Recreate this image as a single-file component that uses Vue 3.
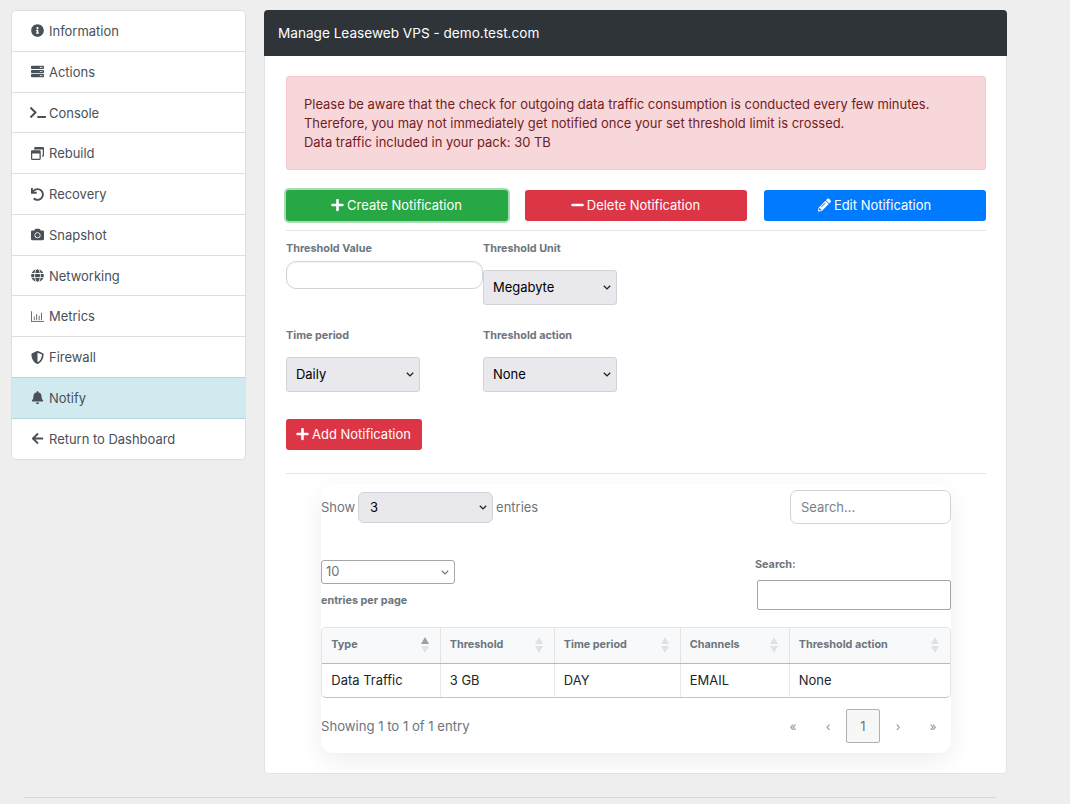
<script setup>
const iconPaths = {
  info: ['0 0 512 512', 'M256 8C119.043 8 8 119.083 8 256c0 136.997 111.043 248 248 248s248-111.003 248-248C504 119.083 392.957 8 256 8zm0 110c23.196 0 42 18.804 42 42s-18.804 42-42 42-42-18.804-42-42 18.804-42 42-42zm56 254c0 6.627-5.373 12-12 12h-88c-6.627 0-12-5.373-12-12v-24c0-6.627 5.373-12 12-12h12v-64h-12c-6.627 0-12-5.373-12-12v-24c0-6.627 5.373-12 12-12h64c6.627 0 12 5.373 12 12v100h12c6.627 0 12 5.373 12 12v24z'],
  server: ['0 0 512 512', 'M32 32h448c18 0 32 14 32 32v64c0 18-14 32-32 32H32c-18 0-32-14-32-32V64c0-18 14-32 32-32zm400 40a24 24 0 1 0 0 48 24 24 0 0 0 0-48zm-64 0a24 24 0 1 0 0 48 24 24 0 0 0 0-48zM32 192h448c18 0 32 14 32 32v64c0 18-14 32-32 32H32c-18 0-32-14-32-32v-64c0-18 14-32 32-32zm400 40a24 24 0 1 0 0 48 24 24 0 0 0 0-48zm-64 0a24 24 0 1 0 0 48 24 24 0 0 0 0-48zM32 352h448c18 0 32 14 32 32v64c0 18-14 32-32 32H32c-18 0-32-14-32-32v-64c0-18 14-32 32-32zm400 40a24 24 0 1 0 0 48 24 24 0 0 0 0-48zm-64 0a24 24 0 1 0 0 48 24 24 0 0 0 0-48z'],
  terminal: ['0 0 640 512', 'M257.981 272.971L63.638 467.314c-9.373 9.373-24.569 9.373-33.941 0L7.029 444.647c-9.357-9.357-9.375-24.522-.04-33.901L161.011 256 6.99 101.255c-9.335-9.379-9.317-24.544.04-33.901l22.667-22.667c9.373-9.373 24.569-9.373 33.941 0L257.981 239.03c9.373 9.372 9.373 24.568 0 33.941zM640 456v-32c0-13.255-10.745-24-24-24H312c-13.255 0-24 10.745-24 24v32c0 13.255 10.745 24 24 24h304c13.255 0 24-10.745 24-24z'],
  windows: ['0 0 512 512', 'M176 0h288c26.500 0 48 21.500 48 48v288c0 26.500-21.500 48-48 48h-32v-48h32V96H176v16h-48V48c0-26.500 21.500-48 48-48zM48 128h288c26.500 0 48 21.500 48 48v288c0 26.500-21.500 48-48 48H48c-26.500 0-48-21.500-48-48V176c0-26.500 21.500-48 48-48zm0 128v208h288V256H48z'],
  undo: ['0 0 512 512', 'M212.333 224.333H12c-6.627 0-12-5.373-12-12V12C0 5.373 5.373 0 12 0h48c6.627 0 12 5.373 12 12v78.112C117.773 39.279 184.26 7.47 258.175 8.007c136.906.994 246.448 111.623 246.157 248.532C504.041 393.258 393.12 504 256.333 504c-64.089 0-122.496-24.313-166.51-64.215-5.099-4.622-5.334-12.554-.467-17.42l33.967-33.967c4.474-4.474 11.662-4.717 16.401-.525C170.76 415.336 211.58 432 256.333 432c97.268 0 176-78.716 176-176 0-97.267-78.716-176-176-176-58.496 0-110.28 28.476-142.274 72.333h98.274c6.627 0 12 5.373 12 12v48c0 6.627-5.373 12-12 12z'],
  camera: ['0 0 512 512', 'M512 144v288c0 26.500-21.500 48-48 48H48c-26.500 0-48-21.500-48-48V144c0-26.500 21.500-48 48-48h88l12.300-32.900c7-18.700 24.900-31.100 44.900-31.100h125.500c20 0 37.900 12.400 44.900 31.100L376 96h88c26.500 0 48 21.500 48 48zM376 288c0-66.200-53.800-120-120-120s-120 53.800-120 120 53.800 120 120 120 120-53.800 120-120zm-32 0c0 48.500-39.500 88-88 88s-88-39.500-88-88 39.500-88 88-88 88 39.500 88 88z'],
  globe: ['0 0 496 512', 'M336.500 160C322 70.700 287.800 8 248 8s-74 62.700-88.500 152h177zM152 256c0 22.200 1.200 43.500 3.300 64h185.300c2.100-20.500 3.300-41.800 3.300-64s-1.200-43.500-3.300-64H155.300c-2.100 20.500-3.300 41.800-3.300 64zm324.700-96c-28.600-67.900-86.500-120.400-158-141.600 24.400 33.800 41.200 84.700 50 141.600h108zM177.200 18.400C105.800 39.600 47.800 92.100 19.300 160h108c8.700-56.900 25.500-107.800 49.900-141.600zM487.400 192H372.700c2.100 21 3.300 42.500 3.300 64s-1.200 43-3.300 64h114.600c5.500-20.500 8.600-41.800 8.600-64s-3.100-43.500-8.500-64zM120 256c0-21.500 1.200-43 3.300-64H8.600C3.200 212.500 0 233.800 0 256s3.200 43.500 8.600 64h114.600c-2-21-3.200-42.500-3.200-64zm39.500 96c14.500 89.300 48.700 152 88.500 152s74-62.700 88.500-152h-177zm159.300 141.600c71.400-21.200 129.400-73.700 158-141.600h-108c-8.800 56.900-25.600 107.800-50 141.600zM19.300 352c28.600 67.900 86.500 120.400 158 141.600-24.400-33.800-41.200-84.700-50-141.600h-108z'],
  metrics: ['0 0 512 512', 'M0 48h32v384h480v32H0V48zm112 208h32v144h-32V256zm96-96h32v240h-32V160zm96 64h32v176h-32V224zm96-112h32v288h-32V112z'],
  shield: ['0 0 512 512', 'M466.500 83.700l-192-80a48.150 48.150 0 0 0-36.900 0l-192 80C27.700 91.100 16 108.600 16 128c0 198.500 114.500 335.700 221.500 380.300 11.800 4.900 25.100 4.900 36.900 0C360.100 472.600 496 349.300 496 128c0-19.400-11.700-36.900-29.500-44.300zM256.100 446.300l-.1-381 175.900 73.300c-3.300 151.400-82.100 261.100-175.800 307.700z'],
  bell: ['0 0 448 512', 'M224 512c35.320 0 63.970-28.650 63.970-64H160.030c0 35.350 28.650 64 63.970 64zm215.390-149.710c-19.320-20.760-55.470-51.990-55.470-154.290 0-77.700-54.480-139.900-127.940-155.160V32c0-17.670-14.320-32-31.980-32s-31.980 14.330-31.980 32v20.840C118.560 68.100 64.080 130.300 64.080 208c0 102.300-36.150 133.530-55.470 154.290-6 6.450-8.660 14.160-8.610 21.710.11 16.400 12.980 32 32.100 32h383.800c19.120 0 32-15.600 32.100-32 .05-7.550-2.610-15.270-8.610-21.710z'],
  back: ['0 0 448 512', 'M257.500 445.100l-22.200 22.200c-9.400 9.400-24.600 9.400-33.900 0L7 273c-9.400-9.400-9.400-24.600 0-33.900L201.400 44.700c9.400-9.400 24.600-9.400 33.900 0l22.200 22.200c9.500 9.500 9.300 25-.4 34.300L136.600 216H424c13.300 0 24 10.700 24 24v32c0 13.300-10.700 24-24 24H136.600l120.500 114.800c9.800 9.300 10 24.800.4 34.300z'],
  plus: ['0 0 448 512', 'M416 208H272V64c0-17.670-14.330-32-32-32h-32c-17.670 0-32 14.330-32 32v144H32c-17.670 0-32 14.330-32 32v32c0 17.670 14.330 32 32 32h144v144c0 17.670 14.330 32 32 32h32c17.670 0 32-14.330 32-32V304h144c17.670 0 32-14.330 32-32v-32c0-17.670-14.330-32-32-32z'],
  minus: ['0 0 448 512', 'M416 208H32c-17.670 0-32 14.330-32 32v32c0 17.670 14.330 32 32 32h384c17.670 0 32-14.330 32-32v-32c0-17.670-14.330-32-32-32z'],
  pencil: ['0 0 512 512', 'M497.900 142.100l-46.100 46.100c-4.700 4.700-12.300 4.700-17 0l-111-111c-4.700-4.700-4.700-12.300 0-17l46.100-46.100c18.700-18.700 49.100-18.700 67.900 0l60.100 60.100c18.800 18.700 18.800 49.100 0 67.900zM284.200 99.800L21.600 362.400.4 483.900c-2.900 16.400 11.400 30.600 27.800 27.800l121.500-21.300 262.600-262.600c4.700-4.700 4.700-12.300 0-17l-111-111c-4.800-4.700-12.400-4.700-17.100 0zM124.100 339.900c-5.500-5.500-5.500-14.300 0-19.800l154-154c5.500-5.500 14.300-5.500 19.800 0s5.500 14.300 0 19.800l-154 154c-5.500 5.500-14.300 5.500-19.800 0zM88 424h48v36.300l-64.500 11.300-31.100-31.100L51.700 376H88v48z'],
}

const menu = [
  { label: 'Information', icon: 'info' },
  { label: 'Actions', icon: 'server' },
  { label: 'Console', icon: 'terminal', wide: true },
  { label: 'Rebuild', icon: 'windows' },
  { label: 'Recovery', icon: 'undo' },
  { label: 'Snapshot', icon: 'camera' },
  { label: 'Networking', icon: 'globe' },
  { label: 'Metrics', icon: 'metrics' },
  { label: 'Firewall', icon: 'shield' },
  { label: 'Notify', icon: 'bell', active: true },
  { label: 'Return to Dashboard', icon: 'back' },
]

const columns = [
  { label: 'Type', width: '118px', sorted: true },
  { label: 'Threshold', width: '114px' },
  { label: 'Time period', width: '126px' },
  { label: 'Channels', width: '109px' },
  { label: 'Threshold action', width: 'auto' },
]
const row = ['Data Traffic', '3 GB', 'DAY', 'EMAIL', 'None']
</script>

<template>
  <div class="page">
    <div class="layout">
      <nav class="side-menu">
        <a v-for="item in menu" :key="item.label" class="side-item" :class="{ active: item.active }">
          <span class="side-icon">
            <svg :class="{ wide: item.wide }" :viewBox="iconPaths[item.icon][0]"><path :d="iconPaths[item.icon][1]" /></svg>
          </span>
          {{ item.label }}
        </a>
      </nav>

      <main class="card">
        <div class="card-header">Manage Leaseweb VPS - demo.test.com</div>
        <div class="card-body">
          <div class="alert">
            Please be aware that the check for outgoing data traffic consumption is conducted every few minutes.<br />
            Therefore, you may not immediately get notified once your set threshold limit is crossed.<br />
            Data traffic included in your pack: 30 TB
          </div>

          <div class="btn-row">
            <button class="btn green"><svg :viewBox="iconPaths.plus[0]"><path :d="iconPaths.plus[1]" /></svg>Create Notification</button>
            <button class="btn red"><svg :viewBox="iconPaths.minus[0]"><path :d="iconPaths.minus[1]" /></svg>Delete Notification</button>
            <button class="btn blue"><svg :viewBox="iconPaths.pencil[0]"><path :d="iconPaths.pencil[1]" /></svg>Edit Notification</button>
          </div>
          <hr class="rule first" />

          <div class="form-row">
            <div class="field">
              <label>Threshold Value</label>
              <input class="value-input" type="text" />
            </div>
            <div class="field">
              <label>Threshold Unit</label>
              <select class="form-select"><option>Megabyte</option></select>
            </div>
          </div>
          <div class="form-row second">
            <div class="field">
              <label>Time period</label>
              <select class="form-select"><option>Daily</option></select>
            </div>
            <div class="field">
              <label>Threshold action</label>
              <select class="form-select"><option>None</option></select>
            </div>
          </div>

          <button class="btn red add"><svg :viewBox="iconPaths.plus[0]"><path :d="iconPaths.plus[1]" /></svg>Add Notification</button>
          <hr class="rule second-rule" />

          <section class="table-card">
            <div class="table-top">
              <div class="show">
                Show
                <select class="show-select"><option>3</option></select>
                entries
              </div>
              <input class="search-top" type="text" placeholder="Search..." />
            </div>

            <div class="table-controls">
              <div>
                <select class="per-page"><option>10</option></select>
                <div class="small-label per-label">entries per page</div>
              </div>
              <div class="search-box">
                <div class="small-label">Search:</div>
                <input class="search-input" type="text" />
              </div>
            </div>

            <div class="table-wrap">
              <table>
                <thead>
                  <tr>
                    <th v-for="col in columns" :key="col.label" :style="{ width: col.width }">
                      {{ col.label }}
                      <span class="sort" :class="{ sorted: col.sorted }"></span>
                    </th>
                  </tr>
                </thead>
                <tbody>
                  <tr>
                    <td v-for="cell in row" :key="cell">{{ cell }}</td>
                  </tr>
                </tbody>
              </table>
            </div>

            <div class="table-foot">
              <span class="showing">Showing 1 to 1 of 1 entry</span>
              <div class="pager">
                <span>«</span>
                <span>‹</span>
                <span class="current">1</span>
                <span>›</span>
                <span>»</span>
              </div>
            </div>
          </section>
        </div>
      </main>
    </div>
    <hr class="page-rule" />
  </div>
</template>

<style>
html, body {
  margin: 0;
  background: #eeeeee;
  overflow: hidden;
}
</style>

<style scoped>
.page {
  font-family: Inter, "Liberation Sans", sans-serif;
  font-size: 12.96px;
  color: #212529;
  padding: 10px 0 0 11px;
  height: 794px;
  box-sizing: content-box;
}
.layout {
  display: flex;
  align-items: flex-start;
  gap: 18px;
}
.side-menu {
  width: 235px;
  flex: none;
  margin-top: 0.1px;
  background: #fff;
  border: 1px solid #dfdfdf;
  border-radius: 5px;
  box-sizing: border-box;
  overflow: hidden;
}
.side-item {
  display: flex;
  align-items: center;
  height: 40.78px;
  box-sizing: border-box;
  padding-left: 19px;
  color: #495057;
  border-bottom: 1px solid #dfdfdf;
}
.side-item:last-child {
  border-bottom: 0;
  height: 40px;
}
.side-item.active {
  background: #d1eaef;
  border-top: 1px solid #b6d4da;
  border-bottom: 1px solid #b6d4da;
  margin: -1px -1px 0;
  padding-left: 20px;
  height: 41.78px;
}
.side-icon {
  width: 13px;
  height: 13px;
  margin-right: 5px;
  display: flex;
  align-items: center;
  justify-content: center;
  flex: none;
}
.side-icon svg {
  width: 13px;
  height: 13px;
  fill: #495057;
  flex: none;
}
.side-icon svg.wide {
  width: 16px;
}
.card {
  width: 743px;
  flex: none;
  height: 764px;
  box-sizing: border-box;
  background: #fff;
  border: 1px solid #e3e3e3;
  border-radius: 4px;
}
.card-header {
  margin: -1px -1px 0;
  height: 46px;
  padding: 0 14px;
  display: flex;
  align-items: center;
  background: #2f3439;
  color: #fff;
  font-size: 13.6px;
  border-radius: 4px 4px 0 0;
}
.card-body {
  padding: 20px 20px 0 21px;
}
.alert {
  background: #f8d7da;
  border: 1px solid #f5c6cb;
  border-radius: 3px;
  color: #721c24;
  padding: 18px 17px 17px;
  line-height: 19px;
  height: 94px;
  box-sizing: border-box;
}
.btn-row {
  display: grid;
  grid-template-columns: repeat(3, 222px);
  gap: 17px;
  margin-top: 20px;
}
.btn {
  height: 31px;
  border: 0;
  border-radius: 3px;
  color: #fff;
  font-family: inherit;
  font-size: 12.96px;
  display: flex;
  align-items: center;
  justify-content: center;
  gap: 3px;
  padding: 0 1px 1px 0;
}
.btn svg {
  width: 13px;
  height: 14px;
  fill: #fff;
}
.green {
  background: #28a745;
  box-shadow: 0 0 0 2px #a9dcb5;
}
.red {
  background: #dc3545;
}
.blue {
  background: #007bff;
}
.rule {
  border: 0;
  border-top: 1px solid #e4e4e4;
  margin: 0;
}
.rule.first {
  margin-top: 9px;
}
.form-row {
  display: flex;
  margin-top: 10px;
}
.form-row.second {
  margin-top: 23px;
}
.field {
  width: 197px;
  display: flex;
  flex-direction: column;
  align-items: flex-start;
}
label {
  font-size: 10.8px;
  font-weight: 700;
  color: #6c757d;
  line-height: 15px;
  margin-bottom: 6px;
}
.value-input {
  width: 197px;
  height: 28px;
  box-sizing: border-box;
  border: 1px solid #ced4da;
  border-radius: 10px;
  outline: 0;
  margin-top: -1px;
  box-shadow: inset 0 1px 2px rgba(0, 0, 0, 0.05);
}
.form-select,
.show-select,
.per-page {
  appearance: none;
  background-repeat: no-repeat;
  background-image: url("data:image/svg+xml,%3Csvg xmlns='http://www.w3.org/2000/svg' width='8' height='5'%3E%3Cpath d='M.8.8 4 3.900 7.200.8' fill='none' stroke='%23222' stroke-width='1.400'/%3E%3C/svg%3E");
  background-position: right 5px center;
}
.form-select {
  width: 134px;
  height: 35px;
  margin-top: 8px;
  padding: 0 0 2px 9px;
  background-color: #e9e9ed;
  border: 1px solid #ced4da;
  border-radius: 3px;
  font-family: inherit;
  font-size: 12.96px;
  color: #000;
}
.add {
  width: 136px;
  margin-top: 27px;
}
.rule.second-rule {
  margin-top: 23px;
}
.table-card {
  margin: 10px 35px 0;
  height: 269px;
  background: #fff;
  border-radius: 12px;
  box-shadow: 0 8px 24px rgba(0, 0, 0, 0.07);
  color: #6c757d;
}
.table-top {
  display: flex;
  justify-content: space-between;
  align-items: center;
  padding-top: 6px;
}
.show {
  display: flex;
  align-items: center;
  gap: 3px;
}
.show-select {
  width: 135px;
  height: 31px;
  padding-left: 11px;
  background-color: #e9e9ed;
  border: 1px solid #ced4da;
  border-radius: 6px;
  font-family: inherit;
  font-size: 12.96px;
  color: #000;
}
.search-top {
  width: 161px;
  height: 34px;
  box-sizing: border-box;
  border: 1px solid #ced4da;
  border-radius: 7px;
  padding: 0 10px;
  font-family: inherit;
  font-size: 12.96px;
  outline: 0;
}
.search-top::placeholder {
  color: #7a8188;
}
.table-controls {
  display: flex;
  justify-content: space-between;
  margin-top: 36px;
}
.per-page {
  display: block;
  width: 134px;
  height: 24px;
  padding: 0 0 2px 4px;
  background-color: #fff;
  background-image: url("data:image/svg+xml,%3Csvg xmlns='http://www.w3.org/2000/svg' width='8' height='5'%3E%3Cpath d='M.8.8 4 3.900 7.200.8' fill='none' stroke='%23777' stroke-width='1.200'/%3E%3C/svg%3E");
  border: 1px solid #a6a6a6;
  border-radius: 3px;
  font-family: inherit;
  font-size: 12.96px;
  color: #6c757d;
}
.small-label {
  font-size: 10.8px;
  font-weight: 700;
  color: #6c757d;
  line-height: 15px;
}
.per-label {
  margin-top: 9px;
}
.search-box {
  width: 196px;
  margin-top: -3px;
}
.search-input {
  display: block;
  width: 194px;
  height: 30px;
  margin: 8px 0 0 2px;
  box-sizing: border-box;
  border: 1px solid #a6a6a6;
  border-radius: 2px;
  outline: 0;
}
.table-wrap {
  margin-top: 17px;
  border: 1px solid #e3e3e3;
  border-bottom: 1px solid #c4c4c4;
  border-radius: 5px;
  overflow: hidden;
}
table {
  width: 100%;
  border-collapse: collapse;
  table-layout: fixed;
}
th {
  position: relative;
  height: 35px;
  padding: 0 9px 1px 9.3px;
  background: #f8f9fa;
  border-right: 1px solid #e3e3e3;
  border-bottom: 1px solid #b8b8b8;
  font-size: 10.8px;
  font-weight: 700;
  text-align: left;
  color: #6c757d;
  box-sizing: border-box;
}
th:last-child,
td:last-child {
  border-right: 0;
}
td {
  height: 34px;
  padding: 0 9px 0 9.3px;
  color: #212529;
  border-right: 1px solid #e8e8e8;
  box-sizing: border-box;
}
.sort {
  position: absolute;
  right: 10px;
  top: 9px;
  width: 9px;
  height: 16px;
}
.sort::before,
.sort::after {
  content: "";
  position: absolute;
  left: 0;
  border-left: 4.5px solid transparent;
  border-right: 4.5px solid transparent;
}
.sort::before {
  top: 0;
  border-bottom: 7px solid #dfe2e5;
}
.sort::after {
  bottom: 0;
  border-top: 7px solid #dfe2e5;
}
.sort.sorted::before {
  border-bottom-color: #9aa0a6;
}
.table-foot {
  display: flex;
  justify-content: space-between;
  align-items: center;
  margin-top: 11px;
}
.showing {
  font-size: 13.12px;
}
.pager {
  display: flex;
  gap: 1px;
  margin-right: 1px;
  color: #8a929a;
  font-size: 12px;
}
.pager span {
  width: 34px;
  height: 34px;
  display: flex;
  align-items: center;
  justify-content: center;
  box-sizing: border-box;
}
.pager .current {
  background: #f7f7f7;
  border: 1px solid #b0b0b0;
  border-radius: 2px;
  font-size: 12.96px;
  color: #6c757d;
}
.page-rule {
  border: 0;
  border-top: 1px solid #d6d6d6;
  width: 972px;
  margin: 23px 0 0 13px;
}
</style>
